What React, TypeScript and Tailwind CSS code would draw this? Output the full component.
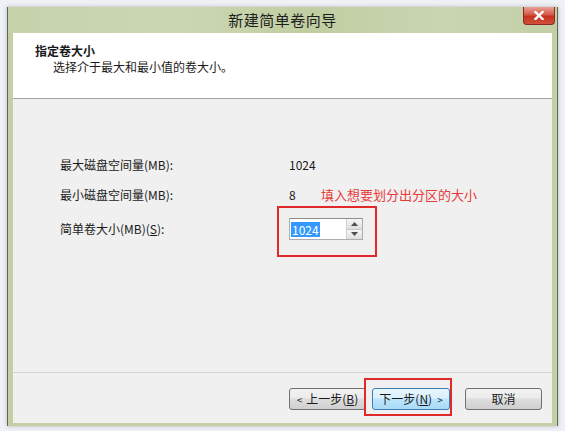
import React from 'react';

const font = { fontFamily: '"Noto Sans CJK SC", "Liberation Sans", sans-serif' };

function WizardButton({ label, hotkey, prefix, suffix, primary }: { label: string; hotkey?: string; prefix?: string; suffix?: string; primary?: boolean }) {
  return (
    <div
      className={`h-[22px] flex items-center justify-center rounded-[3px] border text-[12px] text-[#1a1a1a] ${
        primary
          ? 'w-[78px] border-[#3c7fb1] bg-[linear-gradient(#eaf6fd,#d9f0fc_45%,#bee6fd_50%,#a7d9f5)]'
          : 'w-[77px] border-[#707070] bg-[linear-gradient(#f2f2f2,#ebebeb_45%,#dddddd_50%,#cfcfcf)]'
      }`}
    >
      {prefix && <span className="mr-[4px] text-[10px]">{prefix}</span>}
      <span>{label}</span>
      {hotkey && (
        <span>
          (<span className="underline">{hotkey}</span>)
        </span>
      )}
      {suffix && <span className="ml-[5px] text-[10px]">{suffix}</span>}
    </div>
  );
}

function Spinner() {
  return (
    <div className="flex items-stretch h-[22px] border border-[#abadb3] border-t-[#8e8f8f] bg-white">
      <div className="w-[56px] flex items-center pl-[1px]">
        <span className="bg-[#3399ff] text-white text-[12px] leading-[15px] px-[1px]">1024</span>
      </div>
      <div className="w-[16px] flex flex-col border-l border-[#d0d0d0]">
        <div className="flex-1 flex items-center justify-center border-b border-[#c8c8c8] bg-[linear-gradient(#f6f6f6,#dedede)]">
          <svg width="7" height="4" viewBox="0 0 7 4">
            <path d="M0 4 L3.5 0 L7 4 Z" fill="#4d4d4d" />
          </svg>
        </div>
        <div className="flex-1 flex items-center justify-center bg-[linear-gradient(#f6f6f6,#dedede)]">
          <svg width="7" height="4" viewBox="0 0 7 4">
            <path d="M0 0 L3.5 4 L7 0 Z" fill="#4d4d4d" />
          </svg>
        </div>
      </div>
    </div>
  );
}

export default function App() {
  return (
    <div className="w-[565px] h-[431px] bg-[#eef2f6] pt-[7px] pl-[7px] overflow-hidden" style={font}>
      <div className="w-[551px] h-[419px] flex flex-col border-x border-[#5f6858] bg-[#c3d0a6] shadow-[0_0_4px_rgba(0,0,0,0.25)]">
        {/* title bar */}
        <div className="relative h-[26px] flex items-center justify-center bg-[linear-gradient(90deg,#c5d2aa,#cbd7b3_30%,#c0cea2_55%,#c9d5b1_80%,#c2cfa5)]">
          <span className="text-[15px] text-[#1e1e1e] tracking-[0.5px]">新建简单卷向导</span>
          <div className="absolute right-[2px] top-0 w-[32px] h-[18px] rounded-b-[4px] border border-t-0 border-[#8a2a20] bg-[linear-gradient(#e9a297,#d6594a_45%,#c7321f_55%,#d0503c)] flex items-center justify-center">
            <svg width="10" height="9" viewBox="0 0 10 9">
              <path d="M1.5 1 L8.5 8 M8.5 1 L1.5 8" stroke="#ffffff" strokeWidth="2.4" strokeLinecap="square" />
            </svg>
          </div>
        </div>

        {/* client area */}
        <div className="flex-1 mx-[5px] mb-[3px] flex flex-col bg-[#f0f0f0]">
          <div className="h-[66px] bg-white border-b border-[#a0a0a0] pt-[10px] pl-[22px] text-[12px] leading-[16px] text-[#1a1a1a]">
            <div className="font-bold">指定卷大小</div>
            <div className="pl-[18px]">选择介于最大和最小值的卷大小。</div>
          </div>

          <div className="relative h-[273px] pt-[51px] pl-[47px] text-[12px] text-[#1a1a1a]">
            <div className="h-[30px] flex items-center">
              <span className="w-[229px]">最大磁盘空间量(MB):</span>
              <span>1024</span>
            </div>
            <div className="h-[30px] flex items-center">
              <span className="w-[229px]">最小磁盘空间量(MB):</span>
              <span className="w-[32px]">8</span>
              <span className="text-[13px] text-[#e8383a]">填入想要划分出分区的大小</span>
            </div>
            <div className="mt-[8px] h-[22px] flex items-center">
              <span className="w-[229px]">
                简单卷大小(MB)(<span className="underline">S</span>):
              </span>
              <Spinner />
            </div>
            <div className="absolute left-[264px] top-[107px] w-[100px] h-[51px] border-2 border-[#e02a2a]" />
          </div>

          <div className="relative flex-1 border-t border-[#d5d5d5] flex justify-end items-start pt-[15px] pr-[10px]">
            <WizardButton prefix="<" label="上一步" hotkey="B" />
            <div className="ml-[6px]">
              <WizardButton primary label="下一步" hotkey="N" suffix=">" />
            </div>
            <div className="ml-[15px]">
              <WizardButton label="取消" />
            </div>
            <div className="absolute left-[351px] top-[5px] w-[88px] h-[38px] border-2 border-[#e02a2a]" />
          </div>
        </div>
      </div>
    </div>
  );
}
